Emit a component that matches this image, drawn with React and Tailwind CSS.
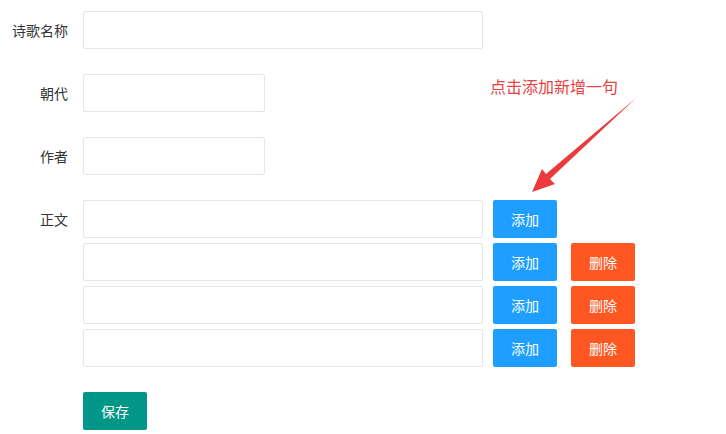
const FONT = { fontFamily: '"Noto Sans CJK SC", "Noto Sans", sans-serif' };

function Label({ children }) {
  return (
    <label className="w-[68px] shrink-0 text-right text-[14px] leading-[38px] text-[#333]">
      {children}
    </label>
  );
}

function TextInput({ width = "w-[400px]" }) {
  return (
    <input
      type="text"
      className={`${width} h-[38px] rounded-[2px] border border-[#e6e6e6] bg-white px-2.5 text-[14px] outline-none`}
    />
  );
}

function Btn({ color, children, className = "" }) {
  return (
    <button
      className={`h-[38px] w-[64px] rounded-[2px] text-[14px] text-white ${color} ${className}`}
    >
      {children}
    </button>
  );
}

export default function App() {
  const lines = [0, 1, 2, 3];

  return (
    <div className="relative h-[434px] w-[726px] bg-white" style={FONT}>
      <div className="flex flex-col gap-[25px] pt-[11px]">
        <div className="flex items-start">
          <Label>诗歌名称</Label>
          <div className="ml-[15px]">
            <TextInput />
          </div>
        </div>

        <div className="flex items-start">
          <Label>朝代</Label>
          <div className="ml-[15px]">
            <TextInput width="w-[182px]" />
          </div>
        </div>

        <div className="flex items-start">
          <Label>作者</Label>
          <div className="ml-[15px]">
            <TextInput width="w-[182px]" />
          </div>
        </div>

        <div className="flex items-start">
          <Label>正文</Label>
          <div className="ml-[15px] flex flex-col gap-[5px]">
            {lines.map((i) => (
              <div key={i} className="flex items-center">
                <TextInput />
                <Btn color="bg-[#1e9fff]" className="ml-[10px]">
                  添加
                </Btn>
                {i > 0 && (
                  <Btn color="bg-[#ff5722]" className="ml-[14px]">
                    删除
                  </Btn>
                )}
              </div>
            ))}
          </div>
        </div>

        <div className="flex">
          <div className="ml-[83px]">
            <Btn color="bg-[#009688]">保存</Btn>
          </div>
        </div>
      </div>

      {/* annotation */}
      <div className="absolute left-[490px] top-[74px] text-[16px] leading-[24px] text-[#e8413f]">
        点击添加新增一句
      </div>
      <svg className="absolute left-0 top-0" width="726" height="434">
        <polygon
          points="636,98 550,179 555,184 532,192 542,169 546,174"
          fill="#ec3a3c"
        />
      </svg>
    </div>
  );
}
